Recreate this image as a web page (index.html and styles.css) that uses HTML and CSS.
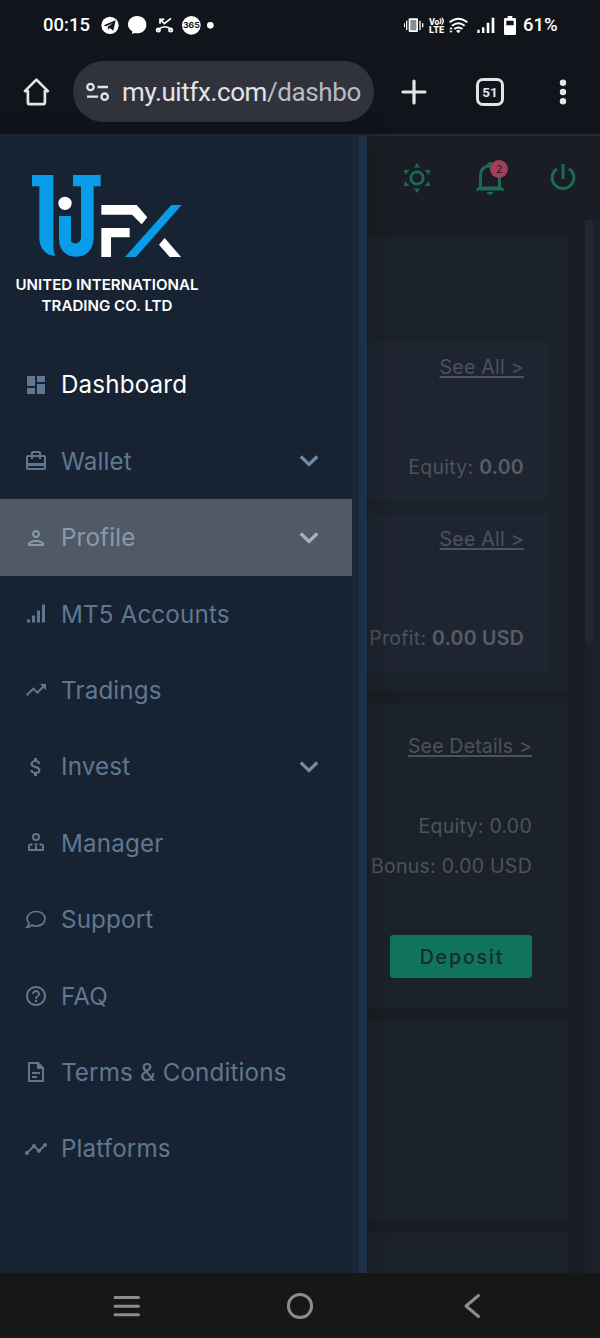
FILE: index.html
```html
<!DOCTYPE html>
<html lang="en">
<head>
<meta charset="utf-8">
<title>UITFX Dashboard</title>
<link rel="stylesheet" href="styles.css">
</head>
<body>
<div class="status">
  <span class="clock">00:15</span>
  <svg class="notif" width="116" height="24" viewBox="0 0 348 72">
    <circle cx="27" cy="37" r="26" fill="#fff"/><path d="M8 37 44 22 37 53 26 45 21 50 20 42 37 29 16 40z" fill="#11141b"/>
    <path d="M108 9c17 0 28 11 28 26s-12 26-28 26q-5 0-7-1L93 63l1-8c-8-5-13-12-13-20 0-15 11-26 27-26z" fill="#fff"/>
    <g fill="none" stroke="#fff" stroke-width="5"><path d="M177 32V19h13M178 20l12 12 20-16M170 51q20-19 42-1"/><circle cx="172" cy="51" r="5"/><circle cx="209" cy="51" r="5"/></g>
    <circle cx="271" cy="37" r="28" fill="#fff"/><text x="271" y="45" text-anchor="middle" textLength="50" lengthAdjust="spacingAndGlyphs" class="badge365">365</text>
    <circle cx="328" cy="37" r="10" fill="#fff"/>
  </svg>
  <svg class="signals" width="116" height="24" viewBox="0 0 348 72">
    <g fill="#fff"><rect x="26" y="16" width="28" height="41" rx="3"/><rect x="31" y="21" width="18" height="31" fill="#898b8f"/><path d="M18 23h4v28h-4zM12 31h3v12h-3zM58 23h4v28h-4zM66 31h4v12h-4z"/></g>
    <text x="87" y="35" textLength="31" lengthAdjust="spacingAndGlyphs" class="volte">Vo</text><path d="M119 17q8 7 0 16M125 14q10 10 0 21" fill="none" stroke="#fff" stroke-width="4"/>
    <text x="87" y="60" textLength="46" lengthAdjust="spacingAndGlyphs" class="volte">LTE</text>
    <g fill="none" stroke="#fff" stroke-width="6"><path d="M149 28q26-22 53 0M156 38q19-15 38 0M163 48q12-9 24 0"/></g><path d="m168 53 7-3 7 3-7 8zM148 49l5-7 5 7zM148 53h10l-5 7z" fill="#fff"/>
    <path d="M232 50h7v10h-7zM246 43h7v17h-7zM260 29h8v31h-8zM275 14h8v46h-8z" fill="#fff"/>
    <path d="M323 9h14v6h7q4 0 4 4v43q0 4-4 4h-28q-4 0-4-4V19q0-4 4-4h7zM319 23v14h22V23z" fill="#fff" fill-rule="evenodd"/>
  </svg>
  <span class="percent">61%</span>
</div>
<div class="browser">
  <svg class="home" width="28" height="30" viewBox="0 0 28 30"><path d="M14 3 2.500 14.500H5.500V26q0 1.500 1.500 1.500h14Q22.500 27.500 22.500 26V14.500h3z" fill="none" stroke="#e3e4e9" stroke-width="2.700" stroke-linejoin="round" stroke-linecap="round" transform="translate(.4 -.4)"/></svg>
  <div class="url">
    <svg width="24" height="20" viewBox="0 0 24 20"><g fill="none" stroke="#e3e4e9" stroke-width="2.300"><circle cx="4.500" cy="5" r="3.200"/><circle cx="18.700" cy="14.700" r="3.200"/><path d="M11.500 5H22M1 14.700h11"/></g></svg>
    <span class="address">my.uitfx.com<span class="path">/dashbo</span></span>
  </div>
  <svg class="plus" width="28" height="28" viewBox="0 0 28 28"><path d="M14 3v22M3 14h22" stroke="#e3e4e9" stroke-width="3.200" stroke-linecap="round"/></svg>
  <div class="tabs">51</div>
  <svg class="more" width="8" height="28" viewBox="0 0 8 28"><g fill="#e3e4e9"><circle cx="4" cy="4.800" r="3.200"/><circle cx="4" cy="14" r="3.200"/><circle cx="4" cy="23.200" r="3.200"/></g></svg>
</div>
<div class="page">
  <aside class="sidebar">
    <div class="menu">
      <div class="brand">
        <svg width="220" height="88" viewBox="0 30 660 264">
          <g fill="#089ce9"><path d="M96 45h64v213q0 19 6 30c-28-2-48-21-48-54V79H96z"/><path d="M219 45h83v34h-21v153c0 36-20 58-53 58-32 0-51-21-51-55v-67h36v72c0 14 30 16 30-8V79h-24z"/><path d="M514 135h31L408 291h-33z"/></g>
          <g fill="#fff"><circle cx="195" cy="130" r="20"/><path d="M304 135h106l32 37-17 21-29-29h-92zM304 204h85v28h-56v59h-29zM494 234l49 57h-34l-32-37z"/></g>
        </svg>
        <div class="company">UNITED INTERNATIONAL<br>TRADING CO. LTD</div>
      </div>
      <nav>
        <a class="item active"><svg viewBox="0 0 24 24"><path d="M3 13h8V3H3v10zm0 8h8v-6H3v6zm10 0h8V11h-8v10zm0-18v6h8V3h-8z"/></svg><span>Dashboard</span></a>
        <a class="item"><svg viewBox="0 0 24 24"><path d="M20 6h-3V4c0-1.110-.89-2-2-2H9c-1.110 0-2 .89-2 2v2H4c-1.110 0-2 .89-2 2v11c0 1.110.89 2 2 2h16c1.110 0 2-.89 2-2V8c0-1.110-.89-2-2-2zM9 4h6v2H9V4zm11 15H4v-2h16v2zm0-5H4V8h3v2h2V8h6v2h2V8h3v6z"/></svg><span>Wallet</span><svg class="chev" viewBox="0 0 20 14"><path d="M1.800 2.500 10 10.500 18.200 2.500"/></svg></a>
        <a class="item hover"><svg viewBox="0 0 24 24"><path d="M12 6c1.100 0 2 .9 2 2s-.9 2-2 2-2-.9-2-2 .9-2 2-2m0 10c2.700 0 5.800 1.290 6 2H6c.23-.72 3.310-2 6-2m0-12C9.790 4 8 5.790 8 8s1.790 4 4 4 4-1.790 4-4-1.790-4-4-4zm0 10c-2.670 0-8 1.340-8 4v2h16v-2c0-2.660-5.330-4-8-4z"/></svg><span>Profile</span><svg class="chev" viewBox="0 0 20 14"><path d="M1.800 2.500 10 10.500 18.200 2.500"/></svg></a>
        <a class="item"><svg viewBox="0 0 24 24"><path d="M3 17.500h3v3H3zM8 13.500h3v7H8zM13 8.500h3v12h-3zM18 2.500h3v18h-3z"/></svg><span>MT5 Accounts</span></a>
        <a class="item"><svg viewBox="0 0 24 24"><path d="m16 6 2.290 2.290-4.880 4.880-4-4L2 16.590 3.410 18l6-6 4 4 6.300-6.290L22 12V6h-6z"/></svg><span>Tradings</span></a>
        <a class="item"><svg viewBox="0 0 24 24"><path d="M11.800 10.900c-2.270-.59-3-1.200-3-2.150 0-1.090 1.010-1.850 2.700-1.850 1.780 0 2.440.85 2.500 2.100h2.210c-.07-1.720-1.120-3.300-3.210-3.810V3h-3v2.160c-1.940.42-3.500 1.680-3.500 3.610 0 2.310 1.910 3.460 4.700 4.130 2.500.6 3 1.480 3 2.410 0 .69-.49 1.790-2.700 1.790-2.060 0-2.870-.92-2.980-2.100h-2.200c.12 2.190 1.760 3.420 3.680 3.830V21h3v-2.150c1.950-.37 3.500-1.500 3.500-3.550 0-2.840-2.430-3.810-4.700-4.400z"/></svg><span>Invest</span><svg class="chev" viewBox="0 0 20 14"><path d="M1.800 2.500 10 10.500 18.200 2.500"/></svg></a>
        <a class="item"><svg viewBox="0 0 24 24"><g class="line"><circle cx="12" cy="6" r="3"/><path d="M8.500 13.500H7q-2 0-2 2V19h14v-3.500q0-2-2-2h-1.500"/></g><path d="M10 12.500h4l-1.300 2.200.7 5.300h-2.800l.7-5.300z"/></svg><span>Manager</span></a>
        <a class="item"><svg viewBox="0 0 24 24"><g class="line thin"><path d="M12.300 3.500c5.100 0 8.700 3.100 8.700 7.300s-3.600 7.200-8.700 7.200q-2.400 0-4.500-.9-1.600 2-4.800 2 1.900-1.600 2-4Q3 13 3 10.800C3 6.600 7.200 3.500 12.300 3.500z"/></g></svg><span>Support</span></a>
        <a class="item"><svg viewBox="0 0 24 24"><path d="M11 18h2v-2h-2v2zm1-16C6.480 2 2 6.480 2 12s4.480 10 10 10 10-4.480 10-10S17.520 2 12 2zm0 18c-4.410 0-8-3.590-8-8s3.590-8 8-8 8 3.590 8 8-3.590 8-8 8zm0-14c-2.210 0-4 1.790-4 4h2c0-1.100.9-2 2-2s2 .9 2 2c0 2-3 1.750-3 5h2c0-2.250 3-2.500 3-5 0-2.210-1.790-4-4-4z"/></svg><span>FAQ</span></a>
        <a class="item"><svg viewBox="0 0 24 24"><g class="line"><path d="M14 3H5v18h14V8zM14 3v5h5M8 13h8M8 17h5"/></g><path d="M14 3v5h5z"/></svg><span>Terms &amp; Conditions</span></a>
        <a class="item"><svg viewBox="0 0 24 24"><path d="M23 8c0 1.100-.9 2-2 2-.18 0-.35-.02-.51-.07l-3.560 3.550c.05.16.07.34.07.52 0 1.100-.9 2-2 2s-2-.9-2-2c0-.18.02-.36.07-.52l-2.550-2.550c-.16.05-.34.07-.52.07s-.36-.02-.52-.07l-4.550 4.560c.05.16.07.33.07.51 0 1.100-.9 2-2 2s-2-.9-2-2 .9-2 2-2c.18 0 .35.02.51.07l4.560-4.550C8.020 9.360 8 9.180 8 9c0-1.100.9-2 2-2s2 .9 2 2c0 .18-.02.36-.07.52l2.550 2.550c.16-.05.34-.07.52-.07s.36.02.52.07l3.550-3.560C19.020 8.350 19 8.180 19 8c0-1.100.9-2 2-2s2 .9 2 2z"/></svg><span>Platforms</span></a>
      </nav>
    </div>
    <div class="gutter"></div>
    <div class="edge"></div>
  </aside>
  <main class="main">
    <header class="tools">
      <svg width="30" height="32" viewBox="0 0 30 32"><circle cx="15" cy="16" r="6.200" fill="none" stroke="#196a56" stroke-width="2.800"/><path d="m15 1 3 4.500h-6zM15 31l3-4.500h-6zM2 8h5.500L3 13zM28 8h-5.500l4.500 5zM2 24h5.500L3 19zM28 24h-5.500l4.500-5z" fill="#196a56"/></svg>
      <div class="bell"><svg width="30" height="34" viewBox="0 0 30 34"><path d="M5.500 28V15.500Q5.500 5 15 5t9.500 10.500V28" fill="none" stroke="#196a56" stroke-width="3"/><path d="M12 4q0-3 3-3t3 3zM12 31h6q0 2.500-3 2.500t-3-2.500zM1 29.500v-1.500l3-2.500h22l3 2.500v1.500z" fill="#196a56"/></svg><span class="count">2</span></div>
      <svg width="30" height="32" viewBox="0 0 30 32"><path d="M15 2v15M9 6.700a10.800 10.800 0 1 0 12 0" fill="none" stroke="#196a56" stroke-width="3"/></svg>
    </header>
    <div class="content">
      <div class="cards">
        <section class="card summary">
          <div class="panel"><a class="link">See All &gt;</a><div>Equity: <b>0.00</b></div></div>
          <div class="panel"><a class="link">See All &gt;</a><div>Profit: <b>0.00 USD</b></div></div>
        </section>
        <section class="card account">
          <a class="link">See Details &gt;</a>
          <div class="figures"><div>Equity: 0.00</div><div>Bonus: 0.00 USD</div></div>
          <button class="deposit">Deposit</button>
        </section>
        <section class="card blank"></section>
        <section class="card last"></section>
      </div>
      <div class="scroll"><div class="thumb"></div></div>
    </div>
  </main>
</div>
<div class="android">
  <svg width="28" height="24" viewBox="0 0 28 24"><path d="M2 3.500h23.500M2 12.200h23.500M2 20.800h23.500"/></svg>
  <svg width="28" height="28" viewBox="0 0 28 28"><circle cx="14" cy="14" r="11.600"/></svg>
  <svg width="24" height="26" viewBox="0 0 24 26"><path d="M19.500 2.500 7 13l12.500 10.500"/></svg>
</div>
</body>
</html>
```

FILE: styles.css
```css
* { box-sizing: border-box; }
body { margin: 0; width: 600px; height: 1338px; overflow: hidden; display: flex; flex-direction: column; background: #11141b; font-family: Inter, "Liberation Sans", sans-serif; }
svg { display: block; flex: none; }

.status { height: 49px; display: flex; align-items: center; color: #fff; font: 500 18.500px Roboto, sans-serif; padding-left: 43px; }
.clock { width: 58px; letter-spacing: 0; padding-top: 1px; }
.signals { margin-left: 183px; }
.percent { margin-left: 7px; padding-top: 1px; }
.badge365 { font: 700 23px Inter, sans-serif; fill: #11141b; }
.volte { font: 800 25px Inter, sans-serif; fill: #fff; }

.browser { height: 87px; border-bottom: 2px solid #262931; display: flex; align-items: center; padding-left: 22px; }
.url { margin-left: 23px; width: 301px; height: 61px; border-radius: 31px; background: #31333c; display: flex; align-items: center; padding-left: 13px; }
.address { margin-left: 12px; font: 400 26px Roboto, sans-serif; letter-spacing: -.4px; color: #e3e4e9; white-space: nowrap; }
.path { color: #b9bbc3; }
.plus { margin-left: 26px; }
.tabs { margin-left: 48px; width: 28px; height: 28px; border: 3px solid #e3e4e9; border-radius: 7px; color: #e3e4e9; font: 700 13.500px/22px Roboto, sans-serif; text-align: center; }
.more { margin-left: 55px; }

.page { height: 1137px; display: flex; background: #1a1e24; }
.sidebar { width: 367px; display: flex; box-shadow: 0 0 24px rgba(10, 18, 24, .35); z-index: 1; }
.menu { width: 352px; background: #172333; }
.gutter { width: 7px; background: #192637; }
.edge { width: 8px; background: #1d3148; }
.brand { height: 210.700px; padding-top: 34px; }
.company { width: 214px; margin-top: 15.500px; text-align: center; color: #fff; font-size: 15.100px; font-weight: 600; line-height: 21.500px; }

.item { height: 76.400px; display: flex; align-items: center; padding: 0 33px 0 24px; color: #60778f; font-size: 24.200px; letter-spacing: .15px; }
.item svg { width: 24px; height: 24px; fill: #60778f; }
.item span { margin-left: 13px; flex: 1; white-space: nowrap; }
.item .chev { width: 20px; height: 14px; fill: none; stroke: #708ba3; stroke-width: 3.200; }
.item .line { fill: none; stroke: #60778f; stroke-width: 2; }
.item .thin { stroke-width: 1.700; }
.active { color: #fff; }
.hover { background: #505a66; color: #8b9aab; }
.hover svg { fill: #8b9aab; }
.hover .chev { stroke: #a5b3c1; }

.main { width: 233px; color: #4c535e; font-size: 19.500px; letter-spacing: .27px; }
.tools { height: 84px; display: flex; align-items: center; gap: 43px; padding-left: 35px; padding-bottom: 1px; }
.bell { position: relative; }
.count { position: absolute; left: 15px; top: -1px; width: 18px; height: 18px; border-radius: 50%; background: #a13f59; color: #24212b; font-size: 11px; line-height: 18px; text-align: center; letter-spacing: 0; }
.content { height: 1053px; display: flex; overflow: hidden; }
.cards { width: 200px; padding-top: 18px; display: flex; flex-direction: column; gap: 13px; }
.card { background: #1c222a; flex: none; white-space: nowrap; }
.summary { height: 452px; padding: 104px 18px 18px 0; display: flex; flex-direction: column; gap: 13px; }
.panel { flex: 1; background: #1f2530; padding: 10px 25px 19px 0; display: flex; flex-direction: column; justify-content: space-between; align-items: flex-end; line-height: 30px; }
.panel b { font-weight: 600; color: #565d68; }
.link { text-decoration: underline; text-underline-offset: 2px; text-decoration-thickness: 1.500px; }
.account { height: 305px; padding: 28px 35px 30px 0; display: flex; flex-direction: column; align-items: flex-end; }
.account .link { line-height: 30px; letter-spacing: .18px; }
.figures { margin-top: 45px; line-height: 40px; text-align: right; }
.deposit { margin-top: 49px; width: 142px; height: 43px; border: 0; border-radius: 3px; background: #10735b; color: #142c2d; font: 500 19.500px Inter, sans-serif; letter-spacing: 1.900px; padding: 0 0 0 2px; }
.blank { height: 199px; }
.last { height: 40px; }
.scroll { width: 15px; margin-left: 18px; background: #1b202a; }
.thumb { width: 8px; height: 424px; border-radius: 2px; background: #1f2832; }

.android { height: 65px; background: #171717; display: flex; align-items: center; padding-left: 113px; gap: 145px; z-index: 2; }
.android svg { fill: none; stroke: #8c8c8c; stroke-width: 3; stroke-linecap: round; stroke-linejoin: round; }
```
